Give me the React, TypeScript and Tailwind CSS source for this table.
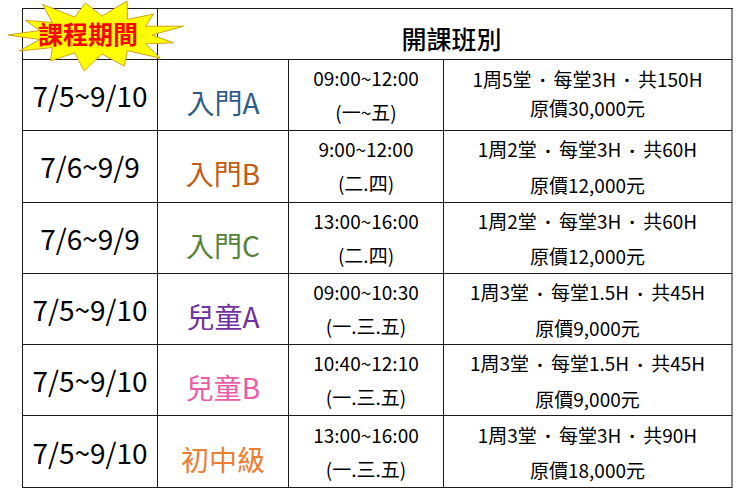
import React from 'react'

type Course = {
    period: string
    name: string
    color: string
    time: string
    days: string
    plan: string[]
    price: string
}

const COURSES: Course[] = [
    { period: '7/5~9/10', name: '入門A', color: 'text-[#2e5c87]', time: '09:00~12:00', days: '(一~五)', plan: ['1周5堂', '每堂3H', '共150H'], price: '原價30,000元' },
    { period: '7/6~9/9', name: '入門B', color: 'text-[#c55a11]', time: '9:00~12:00', days: '(二.四)', plan: ['1周2堂', '每堂3H', '共60H'], price: '原價12,000元' },
    { period: '7/6~9/9', name: '入門C', color: 'text-[#548235]', time: '13:00~16:00', days: '(二.四)', plan: ['1周2堂', '每堂3H', '共60H'], price: '原價12,000元' },
    { period: '7/5~9/10', name: '兒童A', color: 'text-[#7030a0]', time: '09:00~10:30', days: '(一.三.五)', plan: ['1周3堂', '每堂1.5H', '共45H'], price: '原價9,000元' },
    { period: '7/5~9/10', name: '兒童B', color: 'text-[#e85ca8]', time: '10:40~12:10', days: '(一.三.五)', plan: ['1周3堂', '每堂1.5H', '共45H'], price: '原價9,000元' },
    { period: '7/5~9/10', name: '初中級', color: 'text-[#ed7d31]', time: '13:00~16:00', days: '(一.三.五)', plan: ['1周3堂', '每堂3H', '共90H'], price: '原價18,000元' },
]

const FONT = "font-['Noto_Sans_CJK_TC','Noto_Sans',sans-serif]"

// starburst behind the "課程期間" label
function Burst() {
    const cx = 95
    const cy = 35
    const n = 13
    const k = [1, 0.9, 1.06, 0.92, 1.04, 0.9, 1.05, 0.93, 1, 0.95, 1.04, 0.9, 0.98]
    const pts: string[] = []
    for (let i = 0; i < n * 2; i++) {
        const a = Math.PI + (i * Math.PI) / n
        const outer = i % 2 === 0
        const s = outer ? k[(i / 2) % n] : 1
        const rx = outer ? 87 * s : 57
        const ry = outer ? 35 * s : 19
        pts.push(`${(cx + rx * Math.cos(a)).toFixed(1)},${(cy + ry * Math.sin(a)).toFixed(1)}`)
    }
    return (
        <svg width="190" height="72" viewBox="0 0 190 72" className="absolute left-0 top-0">
            <polygon points={pts.join(' ')} fill="#ffff00" stroke="#d4a017" strokeWidth="1" />
        </svg>
    )
}

export default function App() {
    return (
        <div className={`relative h-[493px] w-[737px] bg-white ${FONT} text-black`}>
            <div className="absolute left-[22px] top-[8px]">
                <div className="grid grid-cols-[135px_131px_155px_289px] grid-rows-[51px_repeat(6,71.3px)] border-l border-t border-[#1a1a1a]">
                    <div className="border-b border-r border-[#1a1a1a]" />
                    <div className="col-span-3 flex items-center justify-center border-b border-r-2 border-[#1a1a1a] border-r-[#8c8c8c] pl-[14px] pt-[10px] text-[25px] font-medium">
                        開課班別
                    </div>
                    {COURSES.map((c, i) => (
                        <React.Fragment key={i}>
                            <div className="flex items-center justify-center border-b border-r border-[#1a1a1a] text-[28px] leading-none">
                                {c.period}
                            </div>
                            <div className={`flex items-center justify-center border-b border-r border-[#1a1a1a] pt-[14px] text-[28px] leading-none ${c.color}`}>
                                {c.name}
                            </div>
                            <div className="flex flex-col items-center justify-center border-b border-r border-[#1a1a1a] text-[19px] leading-[34px]">
                                <span>{c.time}</span>
                                <span>{c.days}</span>
                            </div>
                            <div className={`flex flex-col items-center justify-center border-b border-r-2 border-[#1a1a1a] border-r-[#8c8c8c] text-[19px] ${i === 0 ? 'pb-[6px] leading-[27px]' : 'leading-[34px]'}`}>
                                <span className="flex items-center">
                                    {c.plan.map((p, j) => (
                                        <React.Fragment key={j}>
                                            {j > 0 && (
                                                <span className="inline-block w-[22px] pt-[3px] text-center font-['Noto_Sans',sans-serif] font-bold">·</span>
                                            )}
                                            <span>{p}</span>
                                        </React.Fragment>
                                    ))}
                                </span>
                                <span>{c.price}</span>
                            </div>
                        </React.Fragment>
                    ))}
                </div>
            </div>
            <Burst />
            <div className="absolute left-[38px] top-[18px] text-[25px] font-bold leading-[30px] text-[#ff0000]">
                課程期間
            </div>
        </div>
    )
}
